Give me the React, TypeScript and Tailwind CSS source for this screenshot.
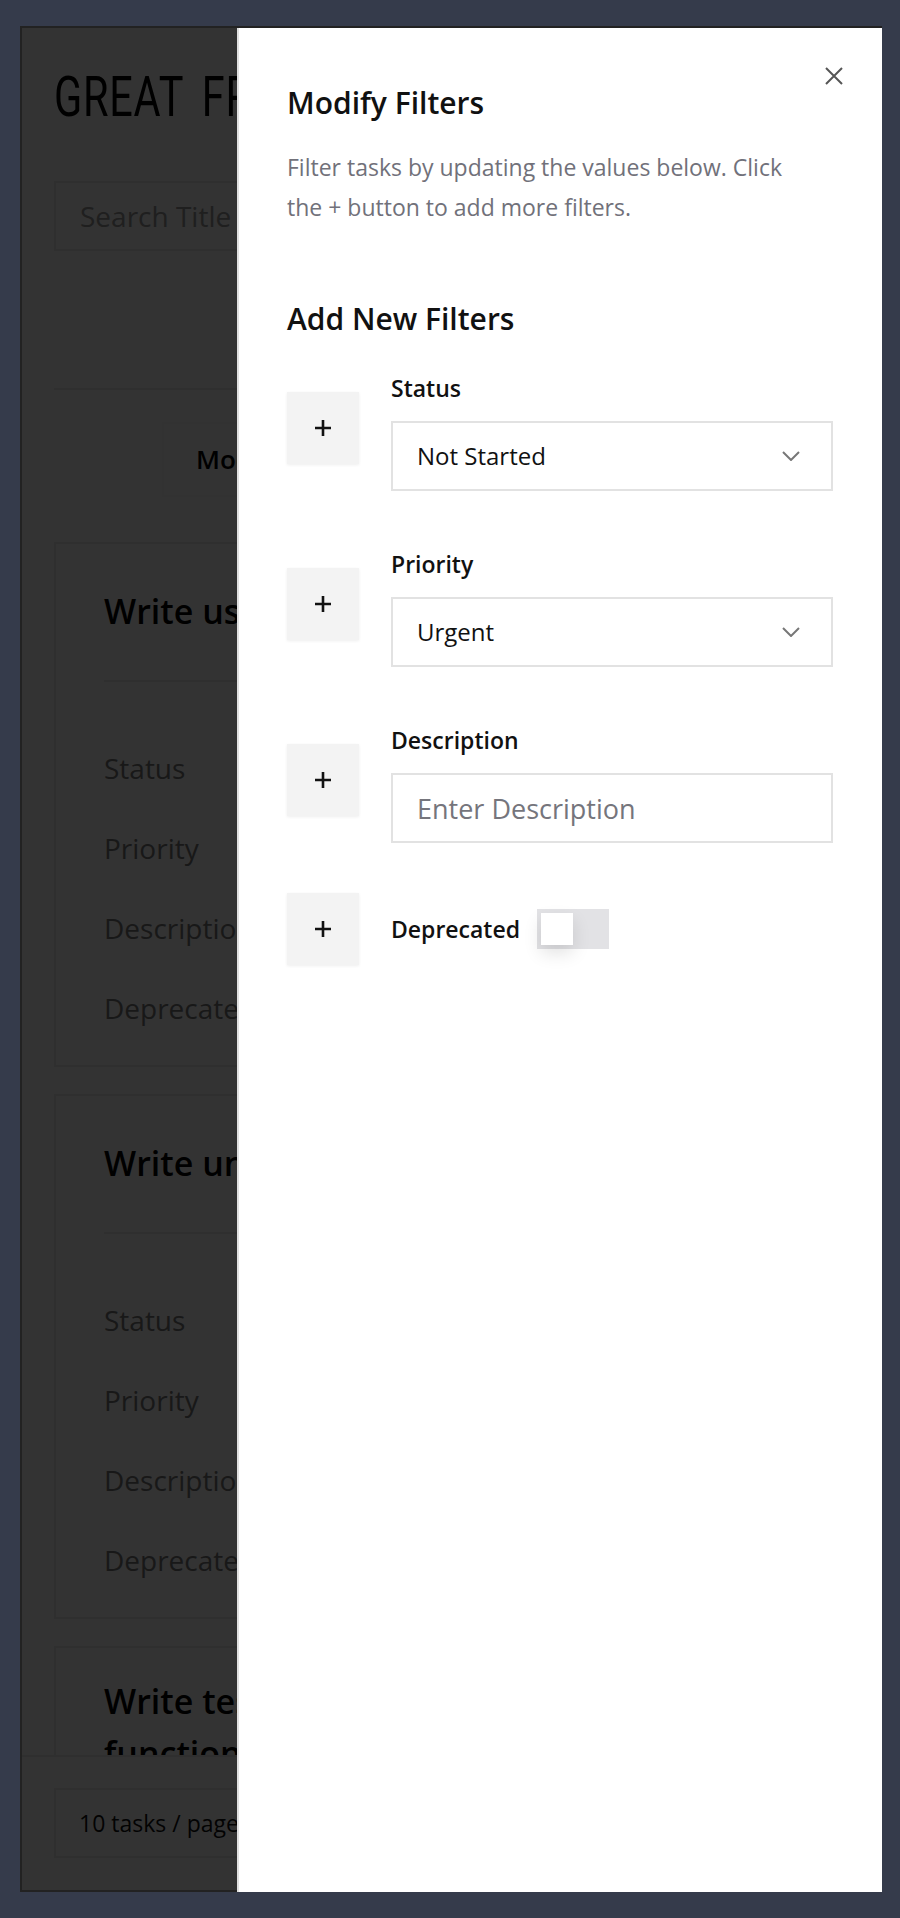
import type { ReactNode } from "react";

const labels = ["Status", "Priority", "Description", "Deprecated"];

export default function App() {
  return (
    <div className="min-h-[1918px] bg-[#353b4b] pt-[26px] pl-5 pr-[18px] font-['Open_Sans',sans-serif]">
      <div className="relative h-[1866px] border-2 border-[#222222]">
        <TaskBoard />
        {/* dim layer under the drawer */}
        <div className="absolute inset-0 bg-black/80" />
        <FilterDrawer />
      </div>
    </div>
  );
}

function TaskBoard() {
  return (
    <div className="flex h-full flex-col bg-white">
      <div className="flex-1 overflow-hidden px-8">
        <h1 className="mt-[41px] origin-left scale-x-[0.74] whitespace-nowrap font-['Roboto',sans-serif] text-[56px] leading-none tracking-[1px] [word-spacing:10px] text-black">
          GREAT FRONTEND TASKS
        </h1>
        <div className="mt-[56px] flex h-[70px] items-center border-2 border-[#e8e8e8] px-6 text-[28px] text-[#9a9a9a]">
          Search Title
        </div>
        <div className="mt-[137px] h-[2px] bg-[#e8e8e8]" />
        <div className="mt-8 ml-[108px] flex h-[75px] w-[300px] items-center border-2 border-[#f7f7f7] px-8 text-[26px] font-semibold text-black">
          Modify Filters
        </div>
        <TaskCard className="mt-[45px] pt-10" title="Write user documentation" />
        <TaskCard className="mt-[27px] pt-10" title="Write unit tests" />
        <TaskCard
          className="mt-[27px] pt-[27px]"
          titleClass="leading-[52px]"
          title="Write tests for all of the string helper functions"
        />
      </div>
      <footer className="border-t-2 border-[#e8e8e8] px-8 pt-[31px] pb-8">
        <div className="flex h-[70px] w-[300px] items-center border-2 border-[#e8e8e8] pl-[23px] text-[23px] text-[#111]">
          10 tasks / page
        </div>
      </footer>
    </div>
  );
}

function TaskCard({ title, className, titleClass }: { title: string; className?: string; titleClass?: string }) {
  return (
    <div className={`border-2 border-[#e8e8e8] px-12 pb-[33px] ${className ?? ""}`}>
      <h2 className={`text-[34px] font-semibold text-black ${titleClass ?? "leading-[55px]"}`}>{title}</h2>
      <div className="mt-[41px] h-[2px] bg-[#e8e8e8]" />
      <div className="mt-[62px] flex flex-col gap-8">
        {labels.map((l) => (
          <div key={l} className="flex h-12 items-center text-[28px] text-[#7a7a7a]">
            {l}
          </div>
        ))}
      </div>
    </div>
  );
}

function FilterDrawer() {
  return (
    <aside className="absolute top-0 -right-[2px] -bottom-[2px] w-[645px] border-l-2 border-[#e0e0e0] bg-white pt-[57px] pr-[49px] pl-12">
      <button type="button" aria-label="Close" className="absolute top-[39px] right-[39px] text-[#555555]">
        <svg width="18" height="18" viewBox="0 0 18 18" fill="none" stroke="currentColor" strokeWidth="2">
          <path d="M1 1l16 16M17 1L1 17" />
        </svg>
      </button>

      <h2 className="text-[30px] font-semibold leading-[36px] text-[#111111]">Modify Filters</h2>
      <p className="mt-[26px] w-[520px] text-[23px] leading-[40px] text-[#71717a]">
        Filter tasks by updating the values below. Click the + button to add more filters.
      </p>

      <h3 className="mt-[74px] text-[30px] font-semibold leading-[36px] text-[#111111]">Add New Filters</h3>

      <div className="mt-[37px] flex flex-col">
        <FilterRow label="Status">
          <SelectBox value="Not Started" />
        </FilterRow>
        <FilterRow label="Priority" className="mt-[59px]">
          <SelectBox value="Urgent" />
        </FilterRow>
        <FilterRow label="Description" className="mt-[59px]">
          <input
            type="text"
            placeholder="Enter Description"
            className="h-[70px] w-full border-2 border-[#e2e2e2] px-6 text-[27px] text-[#111] outline-none placeholder:text-[#75757c]"
          />
        </FilterRow>

        <div className="mt-[50px] flex items-center gap-8">
          <PlusButton />
          <div className="flex items-center gap-[17px]">
            <span className="text-[23px] font-semibold leading-[28px] text-[#111111]">Deprecated</span>
            <div className="h-10 w-[72px] bg-[#e2e2e5] p-1">
              <div className="h-8 w-8 bg-white shadow-[0_8px_18px_rgba(0,0,0,0.12)]" />
            </div>
          </div>
        </div>
      </div>
    </aside>
  );
}

function FilterRow({ label, children, className }: { label: string; children: ReactNode; className?: string }) {
  return (
    <div className={`flex items-start gap-8 ${className ?? ""}`}>
      <PlusButton className="mt-[18px]" />
      <div className="flex flex-1 flex-col">
        <span className="text-[23px] font-semibold leading-[28px] text-[#111111]">{label}</span>
        <div className="mt-[19px]">{children}</div>
      </div>
    </div>
  );
}

function PlusButton({ className }: { className?: string }) {
  return (
    <button
      type="button"
      aria-label="Add filter"
      className={`flex h-[72px] w-[72px] shrink-0 items-center justify-center bg-[#f3f3f3] shadow-[0_1px_3px_rgba(0,0,0,0.07)] ${className ?? ""}`}
    >
      <svg width="16" height="16" viewBox="0 0 16 16" fill="none" stroke="#111111" strokeWidth="2.6">
        <path d="M8 0v16M0 8h16" />
      </svg>
    </button>
  );
}

function SelectBox({ value }: { value: string }) {
  return (
    <div className="flex h-[70px] items-center justify-between border-2 border-[#e2e2e2] pr-[31px] pl-6 text-[24px] text-[#111111]">
      <span>{value}</span>
      <svg width="18" height="10" viewBox="0 0 18 10" fill="none" stroke="#777777" strokeWidth="2">
        <path d="M1 1l8 8 8-8" />
      </svg>
    </div>
  );
}
